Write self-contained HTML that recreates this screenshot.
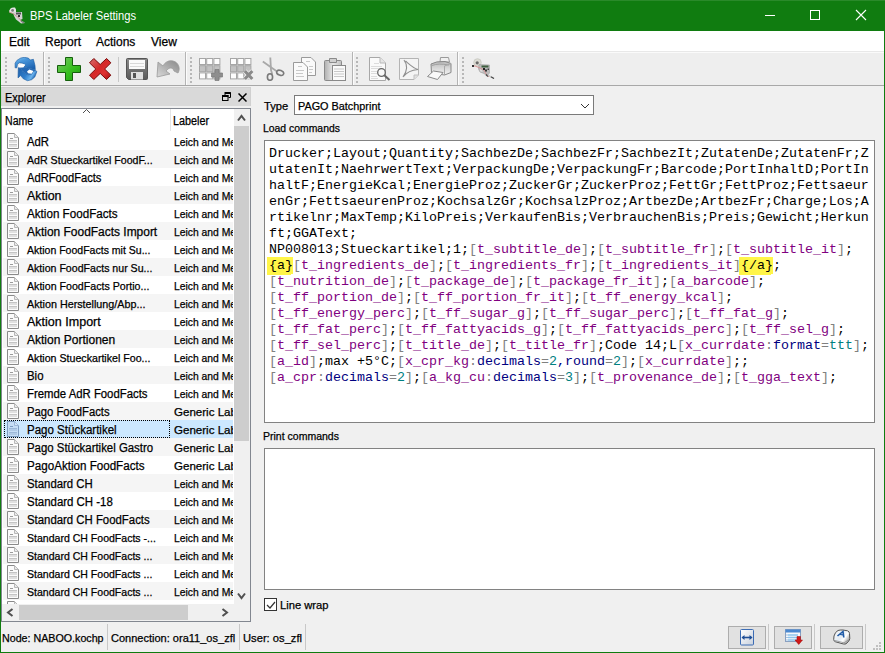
<!DOCTYPE html>
<html><head><meta charset="utf-8">
<style>
*{margin:0;padding:0;box-sizing:border-box}
html,body{width:885px;height:653px;overflow:hidden;background:#F0F0F0;font-family:"Liberation Sans",sans-serif;font-size:12px;color:#000}
.lbl,.row .n,.row .l,#menu span{-webkit-text-stroke:0.25px currentColor}
.a{position:absolute}
#title{position:absolute;left:0;top:0;width:885px;height:31px;background:#107C10;color:#fff}
#menu{position:absolute;left:1px;top:31px;width:883px;height:21px;background:#fff}
#menu span{position:absolute;top:4px;font-size:12px;line-height:14px}
#tool{position:absolute;left:1px;top:52px;width:883px;height:34px;background:#EEEEEE;border-top:1px solid #FAFAFA;border-bottom:1px solid #A8A8A8}
.grip{position:absolute;top:4px;width:2px;height:26px;background:repeating-linear-gradient(#B8B8B8 0 2px,transparent 2px 4px)}
.tsep{position:absolute;top:-1px;width:2px;height:33px;border-left:1px solid #B4B4B4;border-right:1px solid #FCFCFC}
.isep{position:absolute;top:4px;width:1px;height:25px;background:#C8C8C8}
.ic{position:absolute;top:4px}
#dockhdr{position:absolute;left:1px;top:87px;width:250px;height:19px;background:#D9D9D9;border:1px solid #D0D0D0;border-bottom:none}
#list{position:absolute;left:1px;top:108px;width:250px;height:514px;background:#fff;border:1px solid #828790;overflow:hidden}
.hdr{position:absolute;left:0;top:0;width:231px;height:23px;background:#fff}
.row{position:absolute;left:1px;width:230px;height:18px;white-space:nowrap;overflow:hidden}
.row.alt{background:#F5F5F5}
.row.sel{background:#CCE8FF}
.row .n{position:absolute;left:24px;top:2px;line-height:14px;transform-origin:0 0}
.row .l{position:absolute;left:171px;top:3px;line-height:14px;font-size:11px;transform:scaleX(0.94);transform-origin:0 0}
.doc{position:absolute;left:4px;top:1px}
.vs{position:absolute;left:232px;top:0;width:16px;height:495px;background:#F0F0F0}
.hs{position:absolute;left:0;top:495px;width:232px;height:17px;background:#F0F0F0}
.corner{position:absolute;left:232px;top:495px;width:16px;height:17px;background:#F0F0F0}
#tb1,#tb2{position:absolute;left:264px;width:611px;background:#fff;border:1px solid #828282}
#tb1{top:140px;height:283px}
#tb2{top:448px;height:142px}
pre{font-family:"Liberation Mono",monospace;font-size:13.333px;line-height:16px;position:absolute;left:4px;top:5px;white-space:pre}
.g{color:#808080}.p{color:#800080}.nv{color:#000080}.t{color:#008080}
.hl{background:#FFF548;box-shadow:-2px 0 0 #FFF548,-2px 1px 0 #FFF548;padding:1px 0}
#status{position:absolute;left:1px;top:622px;width:883px;height:30px;background:#F0F0F0}
.ssep{position:absolute;top:2px;width:1px;height:26px;background:#C8C8C8}
.sbtn{position:absolute;top:4px;height:23px;background:#E1E1E1;border:1px solid #ADADAD}
.lbl{position:absolute;line-height:14px;font-size:11.2px}
</style></head><body>
<div id="title">
  <svg class="a" style="left:9px;top:7px" width="17" height="17" viewBox="0 0 17 17">
 <path d="M1.5 1.5 Q3 0 6 0.5 Q7.5 2 7 5 L5 6.5 L1 6 L0 4 Z" fill="#E4E4E4"/>
 <circle cx="3.6" cy="3.4" r="1.4" fill="#7A7A7A"/>
 <path d="M4 5 L13 5 L13.5 12 L11 13 L14 14.5 L16 16 L12 16.5 L9 14 L7 12.5 L5 9 Z" fill="#D2D2D2"/>
 <rect x="7" y="5.5" width="5" height="2" fill="#555"/>
 <rect x="9" y="8" width="2" height="2" fill="#333"/>
 <path d="M0 5 L3 6 L6 8 L10 11 L12 14" stroke="#C88" stroke-width="0.8" fill="none"/>
 <path d="M12 14 L15 16" stroke="#777" stroke-width="1.2"/>
</svg>
  <div class="a" style="left:30px;top:9px;font-size:12px;line-height:14px;color:#fff;transform:scaleX(0.93);transform-origin:0 0">BPS Labeler Settings</div>
  <div class="a" style="left:765px;top:15px;width:10px;height:1px;background:#fff"></div>
  <div class="a" style="left:810px;top:10px;width:10px;height:10px;border:1px solid #fff"></div>
  <svg class="a" style="left:855px;top:9px" width="12" height="12" viewBox="0 0 12 12"><path d="M1 1 L11 11 M11 1 L1 11" stroke="#fff" stroke-width="1.1"/></svg>
</div>
<div class="a" style="left:0;top:0;width:885px;height:1px;background:#2A8A2A"></div>
<div class="a" style="left:0;top:31px;width:1px;height:622px;background:#107C10"></div>
<div class="a" style="left:884px;top:31px;width:1px;height:622px;background:#107C10"></div>
<div class="a" style="left:0;top:652px;width:885px;height:1px;background:#107C10"></div>
<div id="menu">
  <span style="left:8px">Edit</span>
  <span style="left:44px">Report</span>
  <span style="left:95px">Actions</span>
  <span style="left:150px">View</span>
</div>
<div class="a" style="left:1px;top:51px;width:883px;height:1px;background:#E8E8E8"></div>
<div id="tool">
  <div class="grip" style="left:4px"></div>
  <!-- band1 -->
<svg class="a" style="left:13px;top:4px" width="24" height="25" viewBox="0 0 24 25">
 <defs>
  <linearGradient id="bl" x1="0" y1="0" x2="0.7" y2="1"><stop offset="0" stop-color="#8CC8F2"/><stop offset="0.35" stop-color="#4A98DC"/><stop offset="1" stop-color="#1C62B0"/></linearGradient>
  <linearGradient id="bl2" x1="0" y1="0" x2="1" y2="0.4"><stop offset="0" stop-color="#1E5EA8"/><stop offset="0.55" stop-color="#2F7ECC"/><stop offset="0.85" stop-color="#6AB2EC"/><stop offset="1" stop-color="#2A70BC"/></linearGradient>
 </defs>
 <path d="M1.1 10.8 L1.1 6.2 L2.9 3.4 L6.6 1.1 L10.2 0.3 L14.4 1.1 L16.2 3 L19.4 2.3 L21 8.5 L21.3 12.6 L9.8 10.3 L11.6 8 L8.4 6.2 L5.2 5.7 L3.4 7.6 L2.9 10.8 Z" fill="url(#bl)" stroke="#1A5AA0" stroke-width="0.6" stroke-linejoin="round"/>
 <path d="M4.3 10.8 L4 20.9 L6.6 18.6 L9.3 21.8 L13.5 23.7 L17.6 22.7 L20.8 20 L22.9 14.5 L21.7 13.5 L19 14.5 L17.6 17.2 L14.4 17.7 L11.2 16.3 L8.4 14 L7 11.7 Z" fill="url(#bl2)" stroke="#1A5AA0" stroke-width="0.6" stroke-linejoin="round"/>
 <path d="M3 10.8 L9.8 10.3 L21.3 12.6 L21.7 13.5 L19 14.5 L17.6 17.2 L14.4 17.7 L11.2 16.3 L8.4 14 L7 11.7 L4.3 10.8 Z" fill="#2468B4"/>
 <path d="M4.7 8.5 L7.5 6.7 L11.2 7.6 L9.3 10.3 L5.2 10.3 Z" fill="#FFFFFF"/>
 <path d="M13 14.5 L15.3 12.6 L19.4 14 L17.6 16.8 L14 16.3 Z" fill="#FFFFFF"/>
</svg>
<div class="tsep" style="left:42px"></div>
<div class="grip" style="left:47px"></div>
<!-- plus -->
<svg class="a" style="left:56px;top:4px" width="24" height="24" viewBox="0 0 24 24">
 <defs><linearGradient id="gr" x1="0" y1="0" x2="1" y2="1"><stop offset="0" stop-color="#7CC46A"/><stop offset="0.55" stop-color="#38C020"/><stop offset="1" stop-color="#1E9A12"/></linearGradient></defs>
 <path d="M8.5 0.5 H15.5 V8.5 H23.5 V15.5 H15.5 V23.5 H8.5 V15.5 H0.5 V8.5 H8.5 Z" fill="url(#gr)" stroke="#15600C" stroke-width="1" stroke-linejoin="round"/>
</svg>
<!-- X -->
<svg class="a" style="left:88px;top:5px" width="23" height="23" viewBox="0 0 23 23">
 <defs><linearGradient id="rd" x1="0" y1="0" x2="1" y2="1"><stop offset="0" stop-color="#D87070"/><stop offset="0.45" stop-color="#D42828"/><stop offset="0.7" stop-color="#E03030"/><stop offset="1" stop-color="#A00C0C"/></linearGradient></defs>
 <path d="M0.5 4.8 L4.8 0.5 L11.2 6.5 L17.6 0.5 L21.9 4.8 L15.6 11 L21.9 17.2 L17.6 21.5 L11.2 15.4 L4.8 21.5 L0.5 17.2 L6.8 11 Z" fill="url(#rd)" stroke="#7A0808" stroke-width="1" stroke-linejoin="round"/>
</svg>
<div class="isep" style="left:117px"></div>
<!-- floppy -->
<svg class="a" style="left:125px;top:5px" width="22" height="22" viewBox="0 0 22 22">
 <defs><linearGradient id="fl" x1="0" y1="0" x2="0" y2="1"><stop offset="0" stop-color="#8A8A8A"/><stop offset="1" stop-color="#5A5A5A"/></linearGradient></defs>
 <path d="M1.5 0.5 H20.5 Q21.5 0.5 21.5 1.5 V20.5 Q21.5 21.5 20.5 21.5 H2.5 L0.5 19.5 V1.5 Q0.5 0.5 1.5 0.5 Z" fill="url(#fl)" stroke="#555"/>
 <rect x="3" y="2" width="16" height="9" fill="#FAFAFA"/>
 <path d="M4 5.5H18M4 8.5H18" stroke="#D8D8D8"/>
 <rect x="5" y="14" width="12" height="7.5" fill="#E0E0E0"/>
 <rect x="7" y="15" width="3" height="5" fill="#555"/>
</svg>
<!-- undo arrow -->
<svg class="a" style="left:155px;top:6px" width="25" height="19" viewBox="0 0 25 19">
 <defs><linearGradient id="un" x1="0" y1="1" x2="1" y2="0"><stop offset="0" stop-color="#DADADA"/><stop offset="0.5" stop-color="#B0B0B0"/><stop offset="1" stop-color="#8A8A8A"/></linearGradient></defs>
 <path d="M2 3 L1 18 L14 15 L10 12 C13 8 17 8 18 12 L22 14 C25 9 22 3 17 2 C13 1 9 3 7 7 Z" fill="url(#un)" stroke="#999" stroke-width="0.8"/>
</svg>
<div class="tsep" style="left:184px"></div>
<div class="grip" style="left:189px"></div>
<!-- grid + -->
<svg class="a" style="left:198px;top:5px" width="25" height="24" viewBox="0 0 25 24">
 <rect x="0.5" y="0.5" width="6" height="6" fill="#FDFDFD" stroke="#A6A6A6"/><rect x="7.7" y="0.5" width="6" height="6" fill="#FDFDFD" stroke="#A6A6A6"/><rect x="14.9" y="0.5" width="6" height="6" fill="#FDFDFD" stroke="#A6A6A6"/><rect x="0.5" y="7.7" width="6" height="6" fill="#C2C2C2" stroke="#A6A6A6"/><rect x="7.7" y="7.7" width="6" height="6" fill="#C2C2C2" stroke="#A6A6A6"/><rect x="14.9" y="7.7" width="6" height="6" fill="#C2C2C2" stroke="#A6A6A6"/><rect x="0.5" y="14.9" width="6" height="6" fill="#FDFDFD" stroke="#A6A6A6"/><rect x="7.7" y="14.9" width="6" height="6" fill="#FDFDFD" stroke="#A6A6A6"/><rect x="14.9" y="14.9" width="6" height="6" fill="#FDFDFD" stroke="#A6A6A6"/>
 <path d="M16 11.5 H20 V15 H23.5 V19 H20 V22.5 H16 V19 H12.5 V15 H16 Z" fill="#8E8E8E" stroke="#7A7A7A" stroke-width="0.7"/>
</svg>
<!-- grid x -->
<svg class="a" style="left:229px;top:5px" width="25" height="24" viewBox="0 0 25 24">
 <rect x="0.5" y="0.5" width="6" height="6" fill="#FDFDFD" stroke="#A6A6A6"/><rect x="7.7" y="0.5" width="6" height="6" fill="#FDFDFD" stroke="#A6A6A6"/><rect x="14.9" y="0.5" width="6" height="6" fill="#FDFDFD" stroke="#A6A6A6"/><rect x="0.5" y="7.7" width="6" height="6" fill="#C2C2C2" stroke="#A6A6A6"/><rect x="7.7" y="7.7" width="6" height="6" fill="#C2C2C2" stroke="#A6A6A6"/><rect x="14.9" y="7.7" width="6" height="6" fill="#C2C2C2" stroke="#A6A6A6"/><rect x="0.5" y="14.9" width="6" height="6" fill="#FDFDFD" stroke="#A6A6A6"/><rect x="7.7" y="14.9" width="6" height="6" fill="#FDFDFD" stroke="#A6A6A6"/><rect x="14.9" y="14.9" width="6" height="6" fill="#FDFDFD" stroke="#A6A6A6"/>
 <path d="M14.8 13 L22.3 21 M22.3 13 L14.8 21" stroke="#F4F4F4" stroke-width="4.6"/>
 <path d="M14.8 13 L22.3 21 M22.3 13 L14.8 21" stroke="#8A8A8A" stroke-width="3.2"/>
</svg>
<!-- scissors -->
<svg class="a" style="left:261px;top:4px" width="23" height="24" viewBox="0 0 23 24">
 <path d="M8.3 0.5 L9 13 L10.2 17" stroke="#A8A8A8" stroke-width="1.8" fill="none"/>
 <path d="M0.8 4.5 L10 11 L15 14.5" stroke="#A8A8A8" stroke-width="1.8" fill="none"/>
 <ellipse cx="8" cy="20" rx="2.6" ry="3.3" fill="none" stroke="#7A7A7A" stroke-width="1.6"/>
 <ellipse cx="18.2" cy="15.8" rx="3.6" ry="2.4" fill="none" stroke="#7A7A7A" stroke-width="1.6" transform="rotate(20 18.2 15.8)"/>
</svg>
<!-- copy -->
<svg class="a" style="left:292px;top:4px" width="23" height="24" viewBox="0 0 23 24">
 <path d="M8.5 0.5 H18 L22.5 5 V18.5 H8.5 Z" fill="#FAFAFA" stroke="#9A9A9A"/>
 <path d="M0.5 5.5 H10 L14.5 10 V23.5 H0.5 Z" fill="#FAFAFA" stroke="#9A9A9A"/>
 <path d="M5 9.5H9M3 13.5H11M3 16.5H10M3 19.5H11M13 4.5H17M16 9.5H20M16 12.5H20M16 15.5H19" stroke="#BDBDBD" stroke-width="0.8"/>
</svg>
<!-- paste -->
<svg class="a" style="left:323px;top:4px" width="22" height="24" viewBox="0 0 22 24">
 <defs><linearGradient id="cb" x1="0" y1="0" x2="1" y2="0"><stop offset="0" stop-color="#B0B0B0"/><stop offset="0.5" stop-color="#E8E8E8"/><stop offset="1" stop-color="#C0C0C0"/></linearGradient></defs>
 <path d="M1.5 3.5 H16.5 Q17.5 3.5 17.5 4.5 V22.5 Q17.5 23.5 16.5 23.5 H1.5 Q0.5 23.5 0.5 22.5 V4.5 Q0.5 3.5 1.5 3.5 Z" fill="url(#cb)" stroke="#8A8A8A"/>
 <path d="M5.5 1.5 H12.5 V5.5 H5.5 Z" fill="#D0D0D0" stroke="#8A8A8A"/>
 <rect x="8.5" y="8.5" width="13" height="15" fill="#FAFAFA" stroke="#8A8A8A"/>
 <path d="M10 12H20M10 14.5H20M10 17H20M10 19.5H20" stroke="#C8C8C8"/>
</svg>
<div class="tsep" style="left:351px"></div>
<div class="grip" style="left:355px"></div>
<!-- doc search -->
<svg class="a" style="left:368px;top:4px" width="22" height="24" viewBox="0 0 22 24">
 <path d="M0.5 0.5 H11 L16.5 6 V23.5 H0.5 Z" fill="#FAFAFA" stroke="#A8A8A8"/>
 <path d="M11 0.5 V6 H16.5" fill="#E6E6E6" stroke="#B8B8B8"/>
 <path d="M5 6.5H10M2 9.5H13M2 11.5H12M2 14.5H8M2 16.5H8M2 19.5H8M2 21.5H9" stroke="#D4D4D4" stroke-width="0.8"/>
 <circle cx="12.5" cy="15.5" r="3.8" fill="#F6F6F6" fill-opacity="0.6" stroke="#666" stroke-width="1.3"/>
 <path d="M15.3 18.3 L20.5 23" stroke="#666" stroke-width="2"/>
</svg>
<!-- pdf -->
<svg class="a" style="left:398px;top:5px" width="20" height="22" viewBox="0 0 20 22">
 <path d="M0.5 0.5 H19.5 V17 L15 21.5 H0.5 Z" fill="#F4F4F4" stroke="#B4B4B4"/>
 <path d="M15 21.5 V17 H19.5" fill="#E0E0E0" stroke="#C0C0C0"/>
 <path d="M5 2 C8 6 9 12 4 19 M4.5 18.5 C8 14 13 12 19 11.5 C14 10 10 6 6.5 3" fill="none" stroke="#8E8E8E" stroke-width="1.1"/>
</svg>
<!-- printer -->
<svg class="a" style="left:426px;top:4px" width="25" height="23" viewBox="0 0 25 23">
 <defs><linearGradient id="pr" x1="0" y1="0" x2="0" y2="1"><stop offset="0" stop-color="#B8B8B8"/><stop offset="0.5" stop-color="#D8D8D8"/><stop offset="1" stop-color="#F4F4F4"/></linearGradient></defs>
 <path d="M13.5 0.5 H21.5 L22.5 5 H13 Z" fill="#F0F0F0" stroke="#9A9A9A"/>
 <path d="M4 7 Q9 4 18 4.5 L24 6.5 V15.5 L17.5 18 L4.5 16 Z" fill="url(#pr)" stroke="#888"/>
 <path d="M5 8.5 Q11 6 22 8" stroke="#A0A0A0" fill="none"/>
 <path d="M6.5 14 L16 15.5 L10.5 22.5 L0.5 19.5 Z" fill="#FAFAFA" stroke="#8A8A8A"/>
 <path d="M17.5 18 V9 L24 6.5" fill="none" stroke="#A8A8A8"/>
</svg>
<div class="tsep" style="left:456px"></div>
<div class="grip" style="left:461px"></div>
<!-- settings -->
<svg class="a" style="left:471px;top:5px" width="23" height="21" viewBox="0 0 23 21">
 <circle cx="5.5" cy="4.5" r="3.8" fill="#DCDCD4" stroke="#C0C0B8" stroke-width="0.6"/>
 <circle cx="5.2" cy="4.8" r="1.6" fill="#6A6A6A"/>
 <path d="M7 6.5 L17.5 7 L17.5 15 L15 18 L12 15.5 L8 14 L6.5 11 Z" fill="#BCBCBC" stroke="#A0A0A0" stroke-width="0.6"/><path d="M8 11 L11 13.5 L8.5 13.5 Z" fill="#E8E8E8"/>
 <rect x="9.5" y="7.5" width="7" height="2" fill="#3E5E3E"/>
 <path d="M0 8 L3 8 L8 10 L12 12 L14 16 L17 19" stroke="#D89090" stroke-width="0.9" fill="none"/>
 <rect x="0" y="7" width="2" height="2" fill="#333"/>
 <rect x="11" y="10" width="2" height="2" fill="#222"/><rect x="13" y="11.5" width="2" height="2" fill="#333"/><rect x="15.5" y="10.5" width="1.5" height="1.5" fill="#444"/>
 <path d="M14 16.5 L16 18.5 M18.5 18.5 L22 20.5" stroke="#444" stroke-width="1.3"/>
 <path d="M16 17 L19 19" stroke="#C8C8C8" stroke-width="1.5"/>
</svg>

</div>
<div id="dockhdr">
  <span class="lbl" style="left:3px;top:3px;font-size:12px;transform:scaleX(0.91);transform-origin:0 0">Explorer</span>
  <svg class="a" style="left:220px;top:4px" width="9" height="9" viewBox="0 0 9 9"><path d="M3 0.5H8.5V5.5H6.5" fill="none" stroke="#000"/><path d="M3 1H8.5" stroke="#000" stroke-width="2"/><path d="M3 0V3" stroke="#000"/><rect x="0.5" y="3.5" width="5.5" height="5" fill="none" stroke="#000"/><path d="M0 4H6.5" stroke="#000" stroke-width="2"/></svg>
  <svg class="a" style="left:236px;top:5px" width="9" height="9" viewBox="0 0 9 9"><path d="M0.5 0.5L8.5 8.5M8.5 0.5L0.5 8.5" stroke="#000" stroke-width="1.5"/></svg>
</div>
<div id="list">
  <div class="hdr">
    <span class="lbl" style="left:3px;top:5px;font-size:12px;transform:scaleX(0.88);transform-origin:0 0">Name</span>
    <svg class="a" style="left:80px;top:-1px" width="10" height="6" viewBox="0 0 10 6"><path d="M1 5L4.5 1.5L8 5" fill="none" stroke="#505050"/></svg>
    <div class="a" style="left:168px;top:0;width:1px;height:22px;background:#E5E5E5"></div>
    <span class="lbl" style="left:171px;top:5px;font-size:12px;transform:scaleX(0.9);transform-origin:0 0">Labeler</span>
  </div>
  <div class="row" style="top:23px"><svg class="doc" width="13" height="17" viewBox="0 0 13 17"><path d="M0.5 0.5 H7.5 L11.5 4.5 V15.5 H0.5 Z" fill="#FBFBFB" stroke="#8A8A8A"/><path d="M7.5 0.5 V4.5 H11.5" fill="#EAEAEA" stroke="#B8B8B8"/><path d="M3 5.5H6" stroke="#9A9A9A"/><path d="M2 7.5H10M2 9H10M2 11.5H10M2 13H10" stroke="#C4C4C4"/></svg><span class="n" style="font-size:12px;top:3px;transform:scaleX(0.942)">AdR</span><span class="l">Leich and Me</span></div>
<div class="row alt" style="top:41px"><svg class="doc" width="13" height="17" viewBox="0 0 13 17"><path d="M0.5 0.5 H7.5 L11.5 4.5 V15.5 H0.5 Z" fill="#FBFBFB" stroke="#8A8A8A"/><path d="M7.5 0.5 V4.5 H11.5" fill="#EAEAEA" stroke="#B8B8B8"/><path d="M3 5.5H6" stroke="#9A9A9A"/><path d="M2 7.5H10M2 9H10M2 11.5H10M2 13H10" stroke="#C4C4C4"/></svg><span class="n" style="font-size:11px;top:3px;transform:scaleX(0.965)">AdR Stueckartikel FoodF...</span><span class="l">Leich and Me</span></div>
<div class="row" style="top:59px"><svg class="doc" width="13" height="17" viewBox="0 0 13 17"><path d="M0.5 0.5 H7.5 L11.5 4.5 V15.5 H0.5 Z" fill="#FBFBFB" stroke="#8A8A8A"/><path d="M7.5 0.5 V4.5 H11.5" fill="#EAEAEA" stroke="#B8B8B8"/><path d="M3 5.5H6" stroke="#9A9A9A"/><path d="M2 7.5H10M2 9H10M2 11.5H10M2 13H10" stroke="#C4C4C4"/></svg><span class="n" style="font-size:12px;top:3px;transform:scaleX(0.930)">AdRFoodFacts</span><span class="l">Leich and Me</span></div>
<div class="row alt" style="top:77px"><svg class="doc" width="13" height="17" viewBox="0 0 13 17"><path d="M0.5 0.5 H7.5 L11.5 4.5 V15.5 H0.5 Z" fill="#FBFBFB" stroke="#8A8A8A"/><path d="M7.5 0.5 V4.5 H11.5" fill="#EAEAEA" stroke="#B8B8B8"/><path d="M3 5.5H6" stroke="#9A9A9A"/><path d="M2 7.5H10M2 9H10M2 11.5H10M2 13H10" stroke="#C4C4C4"/></svg><span class="n" style="font-size:12px;top:3px;transform:scaleX(1.035)">Aktion</span><span class="l">Leich and Me</span></div>
<div class="row" style="top:95px"><svg class="doc" width="13" height="17" viewBox="0 0 13 17"><path d="M0.5 0.5 H7.5 L11.5 4.5 V15.5 H0.5 Z" fill="#FBFBFB" stroke="#8A8A8A"/><path d="M7.5 0.5 V4.5 H11.5" fill="#EAEAEA" stroke="#B8B8B8"/><path d="M3 5.5H6" stroke="#9A9A9A"/><path d="M2 7.5H10M2 9H10M2 11.5H10M2 13H10" stroke="#C4C4C4"/></svg><span class="n" style="font-size:12px;top:3px;transform:scaleX(0.971)">Aktion FoodFacts</span><span class="l">Leich and Me</span></div>
<div class="row alt" style="top:113px"><svg class="doc" width="13" height="17" viewBox="0 0 13 17"><path d="M0.5 0.5 H7.5 L11.5 4.5 V15.5 H0.5 Z" fill="#FBFBFB" stroke="#8A8A8A"/><path d="M7.5 0.5 V4.5 H11.5" fill="#EAEAEA" stroke="#B8B8B8"/><path d="M3 5.5H6" stroke="#9A9A9A"/><path d="M2 7.5H10M2 9H10M2 11.5H10M2 13H10" stroke="#C4C4C4"/></svg><span class="n" style="font-size:12px;top:3px;transform:scaleX(0.996)">Aktion FoodFacts Import</span><span class="l">Leich and Me</span></div>
<div class="row" style="top:131px"><svg class="doc" width="13" height="17" viewBox="0 0 13 17"><path d="M0.5 0.5 H7.5 L11.5 4.5 V15.5 H0.5 Z" fill="#FBFBFB" stroke="#8A8A8A"/><path d="M7.5 0.5 V4.5 H11.5" fill="#EAEAEA" stroke="#B8B8B8"/><path d="M3 5.5H6" stroke="#9A9A9A"/><path d="M2 7.5H10M2 9H10M2 11.5H10M2 13H10" stroke="#C4C4C4"/></svg><span class="n" style="font-size:11px;top:3px;transform:scaleX(0.957)">Aktion FoodFacts mit Su...</span><span class="l">Leich and Me</span></div>
<div class="row alt" style="top:149px"><svg class="doc" width="13" height="17" viewBox="0 0 13 17"><path d="M0.5 0.5 H7.5 L11.5 4.5 V15.5 H0.5 Z" fill="#FBFBFB" stroke="#8A8A8A"/><path d="M7.5 0.5 V4.5 H11.5" fill="#EAEAEA" stroke="#B8B8B8"/><path d="M3 5.5H6" stroke="#9A9A9A"/><path d="M2 7.5H10M2 9H10M2 11.5H10M2 13H10" stroke="#C4C4C4"/></svg><span class="n" style="font-size:11px;top:3px;transform:scaleX(0.963)">Aktion FoodFacts nur Su...</span><span class="l">Leich and Me</span></div>
<div class="row" style="top:167px"><svg class="doc" width="13" height="17" viewBox="0 0 13 17"><path d="M0.5 0.5 H7.5 L11.5 4.5 V15.5 H0.5 Z" fill="#FBFBFB" stroke="#8A8A8A"/><path d="M7.5 0.5 V4.5 H11.5" fill="#EAEAEA" stroke="#B8B8B8"/><path d="M3 5.5H6" stroke="#9A9A9A"/><path d="M2 7.5H10M2 9H10M2 11.5H10M2 13H10" stroke="#C4C4C4"/></svg><span class="n" style="font-size:11px;top:3px;transform:scaleX(0.967)">Aktion FoodFacts Portio...</span><span class="l">Leich and Me</span></div>
<div class="row alt" style="top:185px"><svg class="doc" width="13" height="17" viewBox="0 0 13 17"><path d="M0.5 0.5 H7.5 L11.5 4.5 V15.5 H0.5 Z" fill="#FBFBFB" stroke="#8A8A8A"/><path d="M7.5 0.5 V4.5 H11.5" fill="#EAEAEA" stroke="#B8B8B8"/><path d="M3 5.5H6" stroke="#9A9A9A"/><path d="M2 7.5H10M2 9H10M2 11.5H10M2 13H10" stroke="#C4C4C4"/></svg><span class="n" style="font-size:11px;top:3px;transform:scaleX(0.978)">Aktion Herstellung/Abp...</span><span class="l">Leich and Me</span></div>
<div class="row" style="top:203px"><svg class="doc" width="13" height="17" viewBox="0 0 13 17"><path d="M0.5 0.5 H7.5 L11.5 4.5 V15.5 H0.5 Z" fill="#FBFBFB" stroke="#8A8A8A"/><path d="M7.5 0.5 V4.5 H11.5" fill="#EAEAEA" stroke="#B8B8B8"/><path d="M3 5.5H6" stroke="#9A9A9A"/><path d="M2 7.5H10M2 9H10M2 11.5H10M2 13H10" stroke="#C4C4C4"/></svg><span class="n" style="font-size:12px;top:3px;transform:scaleX(1.043)">Aktion Import</span><span class="l">Leich and Me</span></div>
<div class="row alt" style="top:221px"><svg class="doc" width="13" height="17" viewBox="0 0 13 17"><path d="M0.5 0.5 H7.5 L11.5 4.5 V15.5 H0.5 Z" fill="#FBFBFB" stroke="#8A8A8A"/><path d="M7.5 0.5 V4.5 H11.5" fill="#EAEAEA" stroke="#B8B8B8"/><path d="M3 5.5H6" stroke="#9A9A9A"/><path d="M2 7.5H10M2 9H10M2 11.5H10M2 13H10" stroke="#C4C4C4"/></svg><span class="n" style="font-size:12px;top:3px;transform:scaleX(1.002)">Aktion Portionen</span><span class="l">Leich and Me</span></div>
<div class="row" style="top:239px"><svg class="doc" width="13" height="17" viewBox="0 0 13 17"><path d="M0.5 0.5 H7.5 L11.5 4.5 V15.5 H0.5 Z" fill="#FBFBFB" stroke="#8A8A8A"/><path d="M7.5 0.5 V4.5 H11.5" fill="#EAEAEA" stroke="#B8B8B8"/><path d="M3 5.5H6" stroke="#9A9A9A"/><path d="M2 7.5H10M2 9H10M2 11.5H10M2 13H10" stroke="#C4C4C4"/></svg><span class="n" style="font-size:11px;top:3px;transform:scaleX(0.966)">Aktion Stueckartikel Foo...</span><span class="l">Leich and Me</span></div>
<div class="row alt" style="top:257px"><svg class="doc" width="13" height="17" viewBox="0 0 13 17"><path d="M0.5 0.5 H7.5 L11.5 4.5 V15.5 H0.5 Z" fill="#FBFBFB" stroke="#8A8A8A"/><path d="M7.5 0.5 V4.5 H11.5" fill="#EAEAEA" stroke="#B8B8B8"/><path d="M3 5.5H6" stroke="#9A9A9A"/><path d="M2 7.5H10M2 9H10M2 11.5H10M2 13H10" stroke="#C4C4C4"/></svg><span class="n" style="font-size:12px;top:3px;transform:scaleX(0.951)">Bio</span><span class="l">Leich and Me</span></div>
<div class="row" style="top:275px"><svg class="doc" width="13" height="17" viewBox="0 0 13 17"><path d="M0.5 0.5 H7.5 L11.5 4.5 V15.5 H0.5 Z" fill="#FBFBFB" stroke="#8A8A8A"/><path d="M7.5 0.5 V4.5 H11.5" fill="#EAEAEA" stroke="#B8B8B8"/><path d="M3 5.5H6" stroke="#9A9A9A"/><path d="M2 7.5H10M2 9H10M2 11.5H10M2 13H10" stroke="#C4C4C4"/></svg><span class="n" style="font-size:12px;top:3px;transform:scaleX(0.946)">Fremde AdR FoodFacts</span><span class="l">Leich and Me</span></div>
<div class="row alt" style="top:293px"><svg class="doc" width="13" height="17" viewBox="0 0 13 17"><path d="M0.5 0.5 H7.5 L11.5 4.5 V15.5 H0.5 Z" fill="#FBFBFB" stroke="#8A8A8A"/><path d="M7.5 0.5 V4.5 H11.5" fill="#EAEAEA" stroke="#B8B8B8"/><path d="M3 5.5H6" stroke="#9A9A9A"/><path d="M2 7.5H10M2 9H10M2 11.5H10M2 13H10" stroke="#C4C4C4"/></svg><span class="n" style="font-size:12px;top:3px;transform:scaleX(0.938)">Pago FoodFacts</span><span class="l" style="transform:scaleX(1.05)">Generic Lab</span></div>
<div class="row sel" style="top:311px"><div class="a" style="left:1px;top:0;width:166px;height:18px;border:1px dotted #000"></div><svg class="doc" width="13" height="17" viewBox="0 0 13 17"><path d="M0.5 0.5 H7.5 L11.5 4.5 V15.5 H0.5 Z" fill="#C6DEF6" stroke="#7E9CC0"/><path d="M7.5 0.5 V4.5 H11.5" fill="#D4E6F8" stroke="#9CB8D8"/><path d="M3 5.5H6" stroke="#7E9CC0"/><path d="M2 7.5H10M2 9H10M2 11.5H10M2 13H10" stroke="#9CB8D8"/></svg><span class="n" style="font-size:12px;top:3px;transform:scaleX(0.960)">Pago Stückartikel</span><span class="l" style="transform:scaleX(1.05)">Generic Lab</span></div>
<div class="row alt" style="top:329px"><svg class="doc" width="13" height="17" viewBox="0 0 13 17"><path d="M0.5 0.5 H7.5 L11.5 4.5 V15.5 H0.5 Z" fill="#FBFBFB" stroke="#8A8A8A"/><path d="M7.5 0.5 V4.5 H11.5" fill="#EAEAEA" stroke="#B8B8B8"/><path d="M3 5.5H6" stroke="#9A9A9A"/><path d="M2 7.5H10M2 9H10M2 11.5H10M2 13H10" stroke="#C4C4C4"/></svg><span class="n" style="font-size:12px;top:3px;transform:scaleX(0.950)">Pago Stückartikel Gastro</span><span class="l" style="transform:scaleX(1.05)">Generic Lab</span></div>
<div class="row" style="top:347px"><svg class="doc" width="13" height="17" viewBox="0 0 13 17"><path d="M0.5 0.5 H7.5 L11.5 4.5 V15.5 H0.5 Z" fill="#FBFBFB" stroke="#8A8A8A"/><path d="M7.5 0.5 V4.5 H11.5" fill="#EAEAEA" stroke="#B8B8B8"/><path d="M3 5.5H6" stroke="#9A9A9A"/><path d="M2 7.5H10M2 9H10M2 11.5H10M2 13H10" stroke="#C4C4C4"/></svg><span class="n" style="font-size:12px;top:3px;transform:scaleX(0.968)">PagoAktion FoodFacts</span><span class="l" style="transform:scaleX(1.05)">Generic Lab</span></div>
<div class="row alt" style="top:365px"><svg class="doc" width="13" height="17" viewBox="0 0 13 17"><path d="M0.5 0.5 H7.5 L11.5 4.5 V15.5 H0.5 Z" fill="#FBFBFB" stroke="#8A8A8A"/><path d="M7.5 0.5 V4.5 H11.5" fill="#EAEAEA" stroke="#B8B8B8"/><path d="M3 5.5H6" stroke="#9A9A9A"/><path d="M2 7.5H10M2 9H10M2 11.5H10M2 13H10" stroke="#C4C4C4"/></svg><span class="n" style="font-size:12px;top:3px;transform:scaleX(0.947)">Standard CH</span><span class="l">Leich and Me</span></div>
<div class="row" style="top:383px"><svg class="doc" width="13" height="17" viewBox="0 0 13 17"><path d="M0.5 0.5 H7.5 L11.5 4.5 V15.5 H0.5 Z" fill="#FBFBFB" stroke="#8A8A8A"/><path d="M7.5 0.5 V4.5 H11.5" fill="#EAEAEA" stroke="#B8B8B8"/><path d="M3 5.5H6" stroke="#9A9A9A"/><path d="M2 7.5H10M2 9H10M2 11.5H10M2 13H10" stroke="#C4C4C4"/></svg><span class="n" style="font-size:12px;top:3px;transform:scaleX(0.953)">Standard CH -18</span><span class="l">Leich and Me</span></div>
<div class="row alt" style="top:401px"><svg class="doc" width="13" height="17" viewBox="0 0 13 17"><path d="M0.5 0.5 H7.5 L11.5 4.5 V15.5 H0.5 Z" fill="#FBFBFB" stroke="#8A8A8A"/><path d="M7.5 0.5 V4.5 H11.5" fill="#EAEAEA" stroke="#B8B8B8"/><path d="M3 5.5H6" stroke="#9A9A9A"/><path d="M2 7.5H10M2 9H10M2 11.5H10M2 13H10" stroke="#C4C4C4"/></svg><span class="n" style="font-size:12px;top:3px;transform:scaleX(0.948)">Standard CH FoodFacts</span><span class="l">Leich and Me</span></div>
<div class="row" style="top:419px"><svg class="doc" width="13" height="17" viewBox="0 0 13 17"><path d="M0.5 0.5 H7.5 L11.5 4.5 V15.5 H0.5 Z" fill="#FBFBFB" stroke="#8A8A8A"/><path d="M7.5 0.5 V4.5 H11.5" fill="#EAEAEA" stroke="#B8B8B8"/><path d="M3 5.5H6" stroke="#9A9A9A"/><path d="M2 7.5H10M2 9H10M2 11.5H10M2 13H10" stroke="#C4C4C4"/></svg><span class="n" style="font-size:11px;top:3px;transform:scaleX(0.958)">Standard CH FoodFacts -...</span><span class="l">Leich and Me</span></div>
<div class="row alt" style="top:437px"><svg class="doc" width="13" height="17" viewBox="0 0 13 17"><path d="M0.5 0.5 H7.5 L11.5 4.5 V15.5 H0.5 Z" fill="#FBFBFB" stroke="#8A8A8A"/><path d="M7.5 0.5 V4.5 H11.5" fill="#EAEAEA" stroke="#B8B8B8"/><path d="M3 5.5H6" stroke="#9A9A9A"/><path d="M2 7.5H10M2 9H10M2 11.5H10M2 13H10" stroke="#C4C4C4"/></svg><span class="n" style="font-size:11px;top:3px;transform:scaleX(0.958)">Standard CH FoodFacts ...</span><span class="l">Leich and Me</span></div>
<div class="row" style="top:455px"><svg class="doc" width="13" height="17" viewBox="0 0 13 17"><path d="M0.5 0.5 H7.5 L11.5 4.5 V15.5 H0.5 Z" fill="#FBFBFB" stroke="#8A8A8A"/><path d="M7.5 0.5 V4.5 H11.5" fill="#EAEAEA" stroke="#B8B8B8"/><path d="M3 5.5H6" stroke="#9A9A9A"/><path d="M2 7.5H10M2 9H10M2 11.5H10M2 13H10" stroke="#C4C4C4"/></svg><span class="n" style="font-size:11px;top:3px;transform:scaleX(0.958)">Standard CH FoodFacts ...</span><span class="l">Leich and Me</span></div>
<div class="row alt" style="top:473px"><svg class="doc" width="13" height="17" viewBox="0 0 13 17"><path d="M0.5 0.5 H7.5 L11.5 4.5 V15.5 H0.5 Z" fill="#FBFBFB" stroke="#8A8A8A"/><path d="M7.5 0.5 V4.5 H11.5" fill="#EAEAEA" stroke="#B8B8B8"/><path d="M3 5.5H6" stroke="#9A9A9A"/><path d="M2 7.5H10M2 9H10M2 11.5H10M2 13H10" stroke="#C4C4C4"/></svg><span class="n" style="font-size:11px;top:3px;transform:scaleX(0.958)">Standard CH FoodFacts ...</span><span class="l">Leich and Me</span></div>
<div class="row" style="top:491px"><svg class="doc" width="13" height="17" viewBox="0 0 13 17"><path d="M0.5 0.5 H7.5 L11.5 4.5 V15.5 H0.5 Z" fill="#FBFBFB" stroke="#8A8A8A"/><path d="M7.5 0.5 V4.5 H11.5" fill="#EAEAEA" stroke="#B8B8B8"/><path d="M3 5.5H6" stroke="#9A9A9A"/><path d="M2 7.5H10M2 9H10M2 11.5H10M2 13H10" stroke="#C4C4C4"/></svg><span class="n" style="font-size:12px;top:3px;transform:scaleX(1.000)"></span><span class="l"></span></div>
  <div class="vs">
    <svg class="a" style="left:3px;top:5px" width="9" height="8" viewBox="0 0 9 8"><path d="M1 6.5L4.5 2L8 6.5" fill="none" stroke="#505050" stroke-width="2"/></svg>
    <div class="a" style="left:0px;top:17px;width:15px;height:315px;background:#CDCDCD"></div>
    <svg class="a" style="left:3px;top:483px" width="9" height="8" viewBox="0 0 9 8"><path d="M1 1.5L4.5 6L8 1.5" fill="none" stroke="#505050" stroke-width="2"/></svg>
  </div>
  <div class="hs">
    <svg class="a" style="left:4px;top:4px" width="8" height="9" viewBox="0 0 8 9"><path d="M6.5 1L2 4.5L6.5 8" fill="none" stroke="#505050" stroke-width="2"/></svg>
    <div class="a" style="left:17px;top:1px;width:169px;height:15px;background:#CDCDCD"></div>
    <svg class="a" style="left:219px;top:4px" width="8" height="9" viewBox="0 0 8 9"><path d="M1.5 1L6 4.5L1.5 8" fill="none" stroke="#505050" stroke-width="2"/></svg>
  </div>
  <div class="corner"></div>
</div>
<div class="lbl" style="left:264px;top:99px">Type</div>
<div class="a" style="left:294px;top:95px;width:300px;height:20px;background:#fff;border:1px solid #7A7A7A">
  <span class="lbl" style="left:3px;top:3px;transform:scaleX(0.97);transform-origin:0 0">PAGO Batchprint</span>
  <svg class="a" style="left:285px;top:7px" width="10" height="6" viewBox="0 0 10 6"><path d="M1 1L5 5L9 1" fill="none" stroke="#333"/></svg>
</div>
<div class="lbl" style="left:263px;top:121px;transform:scaleX(0.93);transform-origin:0 0">Load commands</div>
<div id="tb1"><pre>Drucker;Layout;Quantity;SachbezDe;SachbezFr;SachbezIt;ZutatenDe;ZutatenFr;Z
utatenIt;NaehrwertText;VerpackungDe;VerpackungFr;Barcode;PortInhaltD;PortIn
haltF;EnergieKcal;EnergieProz;ZuckerGr;ZuckerProz;FettGr;FettProz;Fettsaeur
enGr;FettsaeurenProz;KochsalzGr;KochsalzProz;ArtbezDe;ArtbezFr;Charge;Los;A
rtikelnr;MaxTemp;KiloPreis;VerkaufenBis;VerbrauchenBis;Preis;Gewicht;Herkun
ft;GGAText;
NP008013;Stueckartikel;1;<span class="g">[</span><span class="p">t_subtitle_de</span><span class="g">]</span>;<span class="g">[</span><span class="p">t_subtitle_fr</span><span class="g">]</span>;<span class="g">[</span><span class="p">t_subtitle_it</span><span class="g">]</span>;
<span class="hl">{a}</span><span class="g">[</span><span class="p">t_ingredients_de</span><span class="g">]</span>;<span class="g">[</span><span class="p">t_ingredients_fr</span><span class="g">]</span>;<span class="g">[</span><span class="p">t_ingredients_it</span><span class="g">]</span><span class="hl">{/a}</span>;
<span class="g">[</span><span class="p">t_nutrition_de</span><span class="g">]</span>;<span class="g">[</span><span class="p">t_package_de</span><span class="g">]</span>;<span class="g">[</span><span class="p">t_package_fr_it</span><span class="g">]</span>;<span class="g">[</span><span class="p">a_barcode</span><span class="g">]</span>;
<span class="g">[</span><span class="p">t_ff_portion_de</span><span class="g">]</span>;<span class="g">[</span><span class="p">t_ff_portion_fr_it</span><span class="g">]</span>;<span class="g">[</span><span class="p">t_ff_energy_kcal</span><span class="g">]</span>;
<span class="g">[</span><span class="p">t_ff_energy_perc</span><span class="g">]</span>;<span class="g">[</span><span class="p">t_ff_sugar_g</span><span class="g">]</span>;<span class="g">[</span><span class="p">t_ff_sugar_perc</span><span class="g">]</span>;<span class="g">[</span><span class="p">t_ff_fat_g</span><span class="g">]</span>;
<span class="g">[</span><span class="p">t_ff_fat_perc</span><span class="g">]</span>;<span class="g">[</span><span class="p">t_ff_fattyacids_g</span><span class="g">]</span>;<span class="g">[</span><span class="p">t_ff_fattyacids_perc</span><span class="g">]</span>;<span class="g">[</span><span class="p">t_ff_sel_g</span><span class="g">]</span>;
<span class="g">[</span><span class="p">t_ff_sel_perc</span><span class="g">]</span>;<span class="g">[</span><span class="p">t_title_de</span><span class="g">]</span>;<span class="g">[</span><span class="p">t_title_fr</span><span class="g">]</span>;Code 14;L<span class="g">[</span><span class="p">x_currdate</span><span class="g">:</span><span class="nv">format</span><span class="g">=</span><span class="t">ttt</span><span class="g">]</span>;
<span class="g">[</span><span class="p">a_id</span><span class="g">]</span>;max +5°C;<span class="g">[</span><span class="p">x_cpr_kg</span><span class="g">:</span><span class="nv">decimals</span><span class="g">=</span><span class="t">2</span><span class="nv">,</span><span class="nv">round</span><span class="g">=</span><span class="t">2</span><span class="g">]</span>;<span class="g">[</span><span class="p">x_currdate</span><span class="g">]</span>;;
<span class="g">[</span><span class="p">a_cpr</span><span class="g">:</span><span class="nv">decimals</span><span class="g">=</span><span class="t">2</span><span class="g">]</span>;<span class="g">[</span><span class="p">a_kg_cu</span><span class="g">:</span><span class="nv">decimals</span><span class="g">=</span><span class="t">3</span><span class="g">]</span>;<span class="g">[</span><span class="p">t_provenance_de</span><span class="g">]</span>;<span class="g">[</span><span class="p">t_gga_text</span><span class="g">]</span>;</pre></div>
<div class="lbl" style="left:263px;top:429px;transform:scaleX(0.94);transform-origin:0 0">Print commands</div>
<div id="tb2"></div>
<div class="a" style="left:264px;top:598px;width:13px;height:13px;border:1px solid #333;background:#fff">
  <svg class="a" style="left:1px;top:1px" width="10" height="10" viewBox="0 0 10 10"><path d="M1 5L4 8L9 2" fill="none" stroke="#333" stroke-width="1.2"/></svg>
</div>
<div class="lbl" style="left:280px;top:598px">Line wrap</div>
<div id="status">
  <span class="lbl" style="left:1px;top:9px;transform:scaleX(0.955);transform-origin:0 0">Node: NABOO.kochp</span>
  <div class="ssep" style="left:106px"></div>
  <span class="lbl" style="left:110px;top:9px;transform:scaleX(0.985);transform-origin:0 0">Connection: ora11_os_zfl</span>
  <div class="ssep" style="left:238px"></div>
  <span class="lbl" style="left:242px;top:9px">User: os_zfl</span>
  <div class="ssep" style="left:304px"></div>
  <div class="sbtn" style="left:727px;width:38px"></div>
<svg class="a" style="left:739px;top:7px" width="14" height="17" viewBox="0 0 14 17">
 <defs><linearGradient id="b1" x1="0" y1="0" x2="1" y2="1"><stop offset="0" stop-color="#FFFFFF"/><stop offset="1" stop-color="#C8D0DC"/></linearGradient></defs>
 <rect x="0.5" y="0.5" width="13" height="15.5" rx="1" fill="url(#b1)" stroke="#3C6CB4"/>
 <path d="M2.5 8.5 H11.5" stroke="#1E4E96" stroke-width="1.6"/>
 <path d="M1.5 8.5 L4.5 6 V11 Z M12.5 8.5 L9.5 6 V11 Z" fill="#1E4E96"/>
</svg>
<div class="ssep" style="left:767px"></div>
<div class="sbtn" style="left:773px;width:38px"></div>
<svg class="a" style="left:784px;top:7px" width="18" height="16" viewBox="0 0 18 16">
 <rect x="0.5" y="0.5" width="15" height="12" fill="#F4F8FC" stroke="#8AA0C0"/>
 <rect x="0.5" y="0.5" width="15" height="3" fill="#4A88D0"/>
 <path d="M3 6H13M3 8.5H13M3 11H13" stroke="#8CC4EC" stroke-width="1.6"/>
 <path d="M1.5 6H2.5M1.5 8.5H2.5M1.5 11H2.5" stroke="#5A8AC0"/>
 <path d="M12 7.5 H15.5 V11 H17.5 L13.75 15.5 L10 11 H12 Z" fill="#D01818" stroke="#A00000" stroke-width="0.5"/>
</svg>
<div class="ssep" style="left:813px"></div>
<div class="sbtn" style="left:819px;width:43px"></div>
<svg class="a" style="left:831px;top:7px" width="19" height="17" viewBox="0 0 19 17">
 <defs><linearGradient id="k1" x1="0" y1="0" x2="1" y2="0.6"><stop offset="0" stop-color="#F8F8F8"/><stop offset="0.55" stop-color="#E4ECF4"/><stop offset="0.75" stop-color="#FFFFFF"/><stop offset="1" stop-color="#A8A8A8"/></linearGradient></defs>
 <path d="M6 1.5 Q8 0.8 11 1 L15.5 1.8 Q17.5 2.5 17.5 4.5 L17.8 9.5 Q17.5 11 16.5 12.5 L14 14.8 Q13 15.3 11.5 15 L3.5 12.8 Q1.7 12.2 1.7 10.5 L2 7 Q3 3 6 1.5 Z" fill="url(#k1)" stroke="#555" stroke-width="1"/>
 <path d="M3 11.5 L12 13.8 L16.5 11" stroke="#909090" fill="none" stroke-width="0.8"/>
 <path d="M5.5 7 L11 2.5 L11.8 8.5" stroke="#1E5AA8" stroke-width="1.6" fill="none"/>
 <path d="M8 5.5 L11.3 5.8" stroke="#1E5AA8" stroke-width="1.2"/>
</svg>
<div class="ssep" style="left:864px"></div>
<div class="a" style="left:878px;top:20px;width:2px;height:2px;background:#C0C0C0"></div>
<div class="a" style="left:875px;top:23px;width:2px;height:2px;background:#C0C0C0"></div>
<div class="a" style="left:878px;top:23px;width:2px;height:2px;background:#C0C0C0"></div>
<div class="a" style="left:872px;top:26px;width:2px;height:2px;background:#C0C0C0"></div>
<div class="a" style="left:875px;top:26px;width:2px;height:2px;background:#C0C0C0"></div>
<div class="a" style="left:878px;top:26px;width:2px;height:2px;background:#C0C0C0"></div>

</div>
</body></html>
